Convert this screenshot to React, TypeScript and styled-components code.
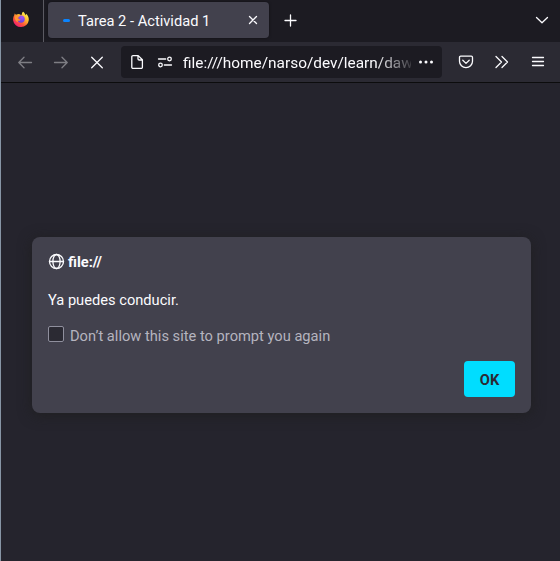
import React from 'react';
import styled, { createGlobalStyle } from 'styled-components';

const GlobalStyle = createGlobalStyle`
  *, *::before, *::after { box-sizing: border-box; }
  html, body { margin: 0; background: #25242d; }
  body { font-family: Roboto, 'Liberation Sans', sans-serif; font-size: 14.67px; color: #fbfbfe; }
  button { font: inherit; color: inherit; border: 0; padding: 0; background: none; }
`;

const Window = styled.div`
  display: flex;
  flex-direction: column;
  height: 561px;
  width: 560px;
  overflow: hidden;
  border-left: 1px solid #8795a5;
  background: #25242d;
`;

const TabBar = styled.header`
  display: flex;
  align-items: center;
  height: 42px;
  flex: none;
  padding-right: 11px;
  background: #1c1b22;
`;

const PinnedTab = styled.div`
  display: flex;
  width: 43px;
  height: 42px;
  padding: 11px 0 0 12px;
  border-right: 1px solid #5b5a62;
`;

const Tab = styled.div`
  display: flex;
  align-items: center;
  width: 221px;
  height: 36px;
  margin: -2px 0 0 4px;
  padding: 0 11px 0 15px;
  border-radius: 4px;
  background: #42414d;
  box-shadow: 0 0 3px rgba(0, 0, 0, 0.45);
`;

const Spinner = styled.span`
  width: 7px;
  height: 3px;
  margin-right: 8px;
  border-radius: 1.5px;
  background: #0a84ff;
`;

const TabTitle = styled.span`
  flex: 1;
  line-height: 20px;
  margin-top: 1px;
  white-space: nowrap;
`;

const IconButton = styled.button<{ $gap?: number; $dim?: boolean }>`
  display: flex;
  flex: none;
  margin-left: ${(p) => p.$gap ?? 0}px;
  opacity: ${(p) => (p.$dim ? 0.4 : 1)};
`;

const Spacer = styled.div`
  flex: 1;
`;

const Toolbar = styled.nav`
  display: flex;
  align-items: center;
  height: 41px;
  flex: none;
  padding: 0 14px 0 16px;
  background: #2b2a33;
  border-bottom: 1px solid #0c0c0d;
`;

const AddressBar = styled.div`
  display: flex;
  align-items: center;
  width: 321px;
  height: 32px;
  margin-left: 16px;
  padding: 0 8px;
  border-radius: 4px;
  background: #1c1b22;
`;

const Address = styled.span`
  width: 228px;
  margin: 2px 0 0 10px;
  overflow: hidden;
  white-space: nowrap;
  font-size: 15.4px;
  line-height: 22px;
  mask-image: linear-gradient(to right, #000 192px, transparent 234px);
`;

const Page = styled.main`
  flex: 1;
  padding: 154px 0 0 31px;
`;

const Dialog = styled.section`
  width: 499px;
  height: 176px;
  padding: 16px;
  border-radius: 8px;
  background: #42414d;
  box-shadow: 0 2px 14px rgba(30, 30, 30, 0.85);
`;

const Origin = styled.h1`
  display: flex;
  align-items: center;
  gap: 3px;
  height: 18px;
  margin: 0;
  font-size: 14.67px;
  font-weight: 700;
`;

const Message = styled.p`
  margin: 20px 0 0;
  line-height: 18px;
`;

const Option = styled.label`
  display: flex;
  gap: 6px;
  height: 20px;
  margin-top: 17px;
  line-height: 20px;
  color: #b5b4bf;
`;

const CheckBox = styled.span`
  width: 16px;
  height: 16px;
  border: 1px solid #8f8f9d;
  border-radius: 2px;
  background: #2b2a33;
`;

const Actions = styled.footer`
  display: flex;
  justify-content: flex-end;
  margin-top: 15px;
`;

const OkButton = styled.button`
  width: 51px;
  height: 36px;
  padding-top: 2px;
  border-radius: 4px;
  background: #00ddff;
  color: #2b2a33;
  font-weight: 700;
`;

const Stroke = styled.svg`
  display: block;
  fill: none;
  stroke: #fbfbfe;
  stroke-width: 1.3;
  stroke-linecap: round;
  stroke-linejoin: round;
`;

const Icon = ({ d, size = 16 }: { d: string; size?: number }) => (
  <Stroke width={size} height={size} viewBox={`0 0 ${size} ${size}`}>
    <path d={d} />
  </Stroke>
);

const FirefoxLogo = () => (
  <svg width="16" height="17" viewBox="0 0 16 17">
    <defs>
      <linearGradient id="flame" x1="0.85" y1="0.1" x2="0.2" y2="0.95">
        <stop offset="0" stopColor="#fff34f" />
        <stop offset="0.35" stopColor="#ffb52e" />
        <stop offset="0.65" stopColor="#ff5a36" />
        <stop offset="1" stopColor="#f01878" />
      </linearGradient>
      <radialGradient id="globe" cx="0.6" cy="0.25" r="0.8">
        <stop offset="0" stopColor="#a457f5" />
        <stop offset="1" stopColor="#5c3be0" />
      </radialGradient>
    </defs>
    <path fill="url(#flame)" d="M10.1.8c1.4 1 2.1 2.2 2.4 3.4.5-.4.7-.8.7-1.4 1.7 1.5 2.7 3.7 2.6 6.1a7.9 7.9 0 0 1-15.7.3C0 7 .5 5.3 1.4 4l.2-1.5L3 3.8c1.1-.7 2.3-1 3.4-.9C7 4.1 8.5 4 9 3.6 8.7 2.5 9.2 1.5 10.1.8Z" />
    <path fill="url(#globe)" d="M5 6.4c.9-.2 1.5-1.1 2.2-1.8 2.5-.6 4.5 1 4.6 3.4.1 2.2-1.6 3.8-3.7 3.8-1.9 0-3.4-1.2-3.7-2.7 1.2.7 2.4.4 3.2-.4-.9-.2-2-.8-2.6-2.3Z" />
    <path fill="#ff9632" d="M1.7 5.5c1.5-1 3.3-1 5-.3-.4.9-1.9 1.2-2 2.1-.1 1 1 1.5 3 1.4-.8 1.2-2.1 1.2-3.3.6.2 1 .7 1.6 1.3 2C3.1 11 1.6 8.7 1.7 5.5Z" />
  </svg>
);

const SettingsIcon = () => (
  <Stroke width="16" height="16" viewBox="0 0 16 16">
    <path d="M1.5 5h7.2M7.3 11h7.2" />
    <circle cx="12.5" cy="5" r="1.8" />
    <circle cx="3.5" cy="11" r="1.8" />
  </Stroke>
);

const DotsIcon = () => (
  <svg width="16" height="16" viewBox="0 0 16 16" fill="#fbfbfe">
    <circle cx="2.5" cy="8" r="1.5" />
    <circle cx="8" cy="8" r="1.5" />
    <circle cx="13.5" cy="8" r="1.5" />
  </svg>
);

const GlobeIcon = () => (
  <Stroke width="17" height="18" viewBox="0 0 17 18">
    <circle cx="8.5" cy="8.5" r="7" />
    <ellipse cx="8.5" cy="8.5" rx="3.6" ry="7" />
    <path d="M1.5 8.5h14" />
  </Stroke>
);

export default function App() {
  return (
    <>
      <GlobalStyle />
      <Window>
        <TabBar>
          <PinnedTab><FirefoxLogo /></PinnedTab>
          <Tab>
            <Spinner />
            <TabTitle>Tarea 2 - Actividad 1</TabTitle>
            <IconButton aria-label="Close tab"><Icon size={10} d="M1.5 1.5l7 7M8.5 1.5l-7 7" /></IconButton>
          </Tab>
          <IconButton $gap={14} aria-label="New tab"><Icon d="M7.5 2v11M2 7.5h11" /></IconButton>
          <Spacer />
          <IconButton aria-label="List tabs"><Icon size={14} d="M1.5 3.5l5.5 5.3 5.5-5.3" /></IconButton>
        </TabBar>
        <Toolbar>
          <IconButton $dim aria-label="Back"><Icon d="M14.5 8.5H2M7 3.3L1.8 8.5 7 13.7" /></IconButton>
          <IconButton $gap={20} $dim aria-label="Forward"><Icon d="M1.5 8.5H14M9 3.3L14.2 8.5 9 13.7" /></IconButton>
          <IconButton $gap={20} aria-label="Stop"><Icon d="M2.7 3.2l10.6 10.6M13.3 3.2L2.7 13.8" /></IconButton>
          <AddressBar>
            <Icon d="M4 1.6h5.2l4.2 4.2v7.4a1.2 1.2 0 0 1-1.2 1.2H4a1.2 1.2 0 0 1-1.2-1.2V2.8A1.2 1.2 0 0 1 4 1.6ZM9 1.8v3.1A1.2 1.2 0 0 0 10.2 6h3" />
            <IconButton $gap={12} aria-label="Permissions"><SettingsIcon /></IconButton>
            <Address>file:///home/narso/dev/learn/daw</Address>
            <IconButton $gap={7} aria-label="Page actions"><DotsIcon /></IconButton>
          </AddressBar>
          <IconButton $gap={16} aria-label="Save to Pocket">
            <Icon d="M2.7 2.2h10.6a1.2 1.2 0 0 1 1.2 1.2v3.8a6.5 6.5 0 0 1-13 0V3.4a1.2 1.2 0 0 1 1.2-1.2ZM4.8 6.3L8 9.4l3.2-3.1" />
          </IconButton>
          <IconButton $gap={20} aria-label="More tools"><Icon d="M2 2.5L7.5 8 2 13.5M8 2.5L13.5 8 8 13.5" /></IconButton>
          <IconButton $gap={20} aria-label="Menu"><Icon d="M2.5 3.5h11M2.5 7.5h11M2.5 11.5h11" /></IconButton>
        </Toolbar>
        <Page>
          <Dialog role="dialog">
            <Origin><GlobeIcon />file://</Origin>
            <Message>Ya puedes conducir.</Message>
            <Option><CheckBox role="checkbox" aria-checked={false} />Don’t allow this site to prompt you again</Option>
            <Actions><OkButton>OK</OkButton></Actions>
          </Dialog>
        </Page>
      </Window>
    </>
  );
}
